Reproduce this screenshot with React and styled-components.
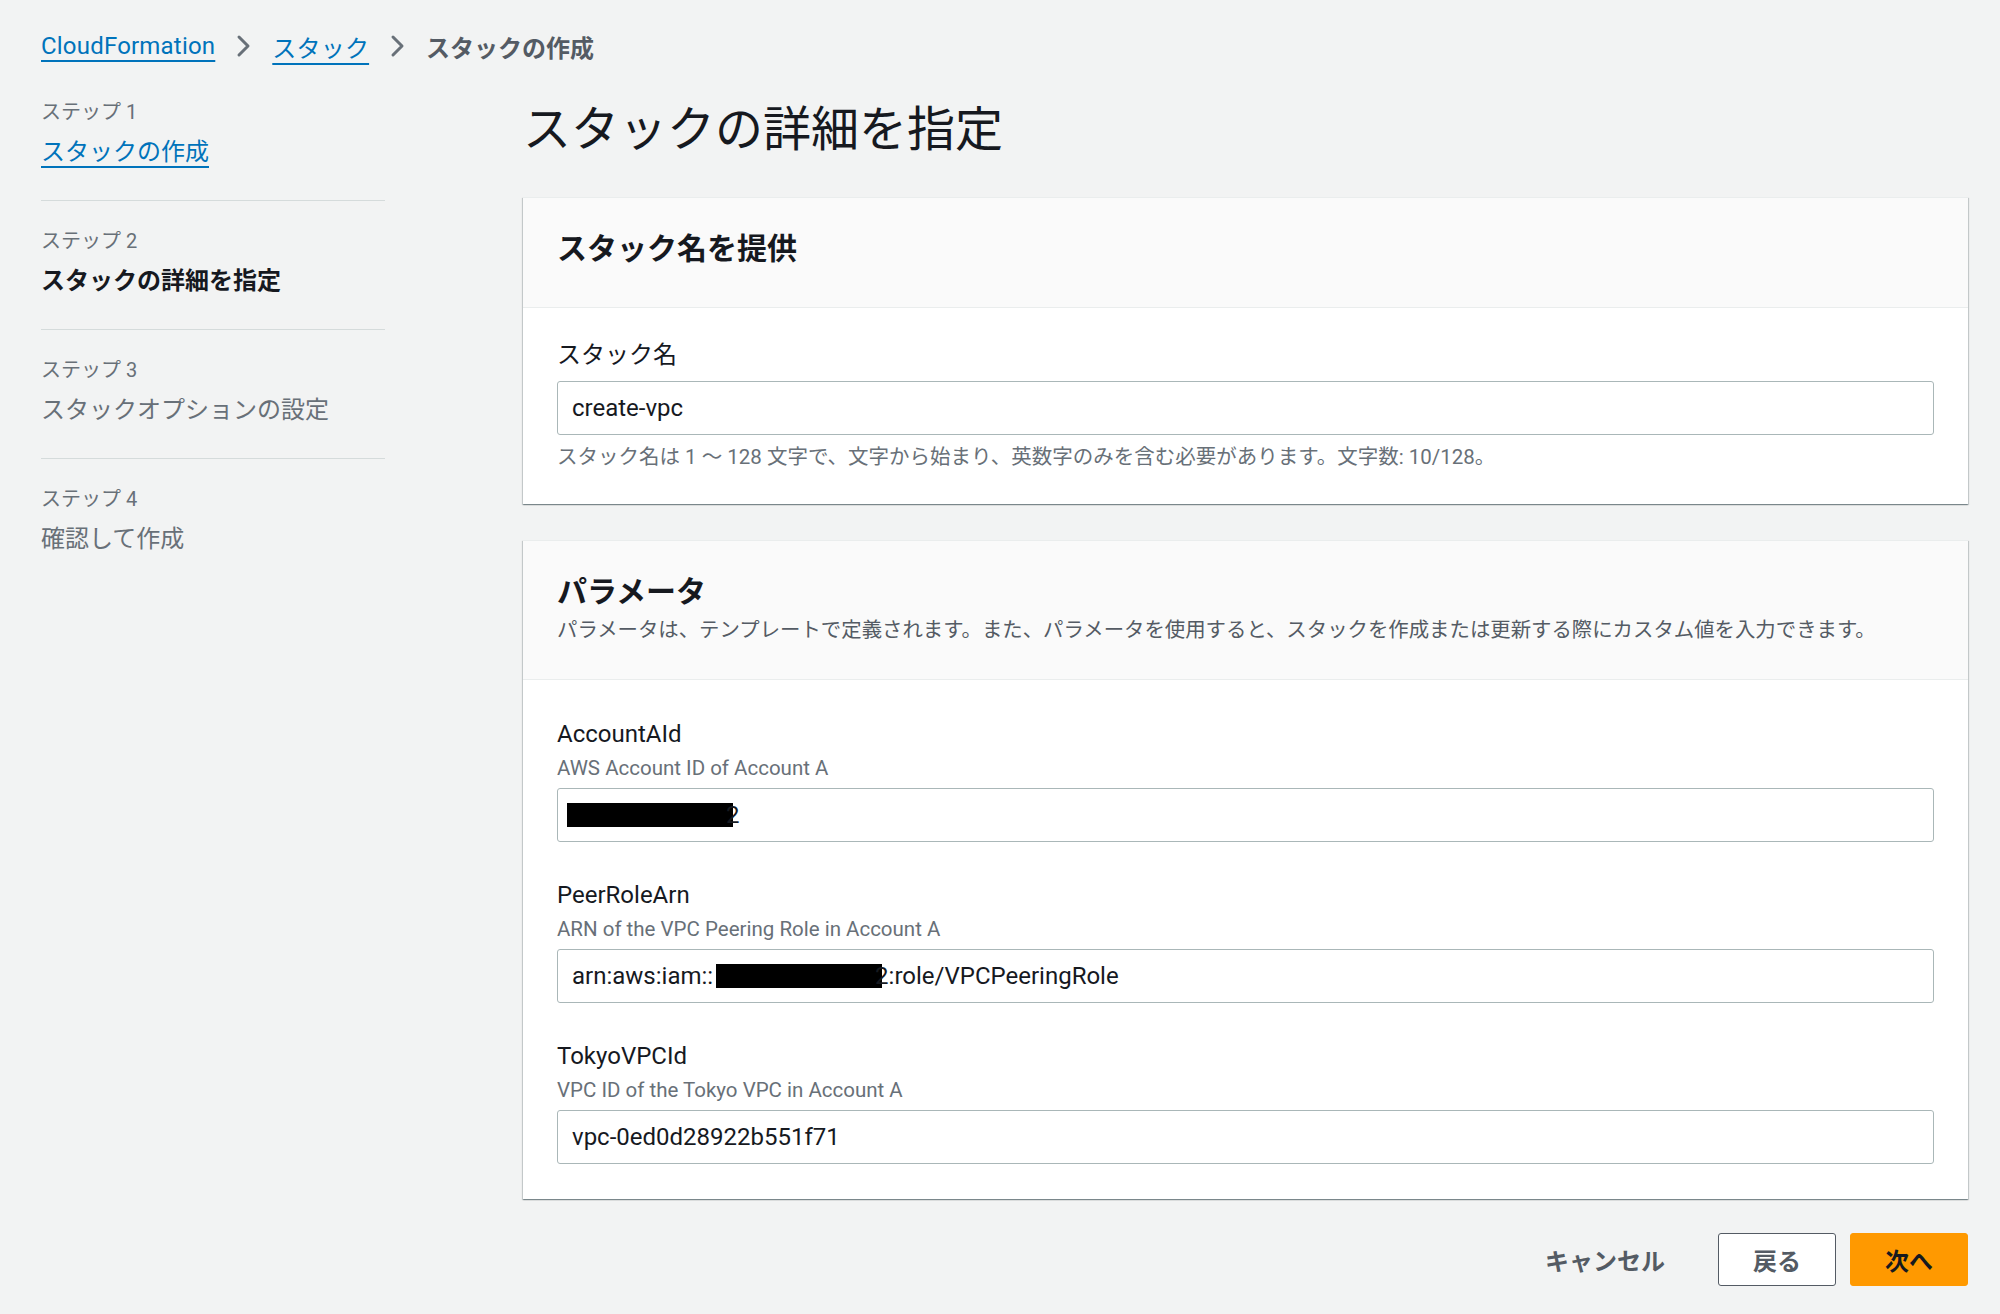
import React from "react";
import styled, { createGlobalStyle } from "styled-components";

const GlobalStyle = createGlobalStyle`
  body {
    margin: 0;
    background: #f2f3f3;
    font-family: Roboto, "Noto Sans CJK JP", sans-serif;
    color: #16191f;
  }
`;

const Page = styled.div`
  padding: 30px 32px 40px 41px;
`;

const Breadcrumbs = styled.nav`
  display: flex;
  align-items: center;
  gap: 21px;
  height: 32px;
  font-size: 24px;
`;

const Crumb = styled.a`
  color: #0073bb;
  letter-spacing: 0.2px;
  text-decoration: underline;
  text-decoration-thickness: 2px;
  text-underline-offset: 6px;
`;

const CurrentCrumb = styled.span`
  color: #545b64;
  font-weight: 700;
`;

const Layout = styled.div`
  display: grid;
  grid-template-columns: 344px 1fr;
  column-gap: 138px;
  margin-top: 36px;
`;

const StepList = styled.ol`
  list-style: none;
  margin: 0;
  padding: 0;
`;

const Step = styled.li`
  padding: 26px 0 32px;
  border-bottom: 1px solid #d5dbdb;
  &:first-child {
    padding-top: 0;
  }
  &:last-child {
    border-bottom: none;
  }
`;

const StepLabel = styled.div`
  font-size: 20px;
  line-height: 28px;
  color: #687078;
`;

const StepTitle = styled.div`
  margin-top: 10px;
  font-size: 24px;
  line-height: 32px;
  color: ${(p) => (p.$active ? "#16191f" : "#687078")};
  font-weight: ${(p) => (p.$active ? 700 : 400)};
  a {
    color: #0073bb;
    text-decoration: underline;
    text-decoration-thickness: 2px;
    text-underline-offset: 6px;
  }
`;

const Main = styled.main`
  min-width: 0;
`;

const PageTitle = styled.h1`
  margin: 4px 0 0;
  font-size: 48px;
  line-height: 56px;
  font-weight: 400;
  color: #16191f;
`;

const Panel = styled.section`
  background: #fff;
  border-top: 1px solid #eaeded;
  box-shadow: 0 1px 1px 0 rgba(0, 28, 36, 0.3),
    1px 1px 1px 0 rgba(0, 28, 36, 0.15), -1px 1px 1px 0 rgba(0, 28, 36, 0.15);
  margin-top: ${(p) => p.$gap || "36px"};
`;

const PanelHeader = styled.header`
  background: #fafafa;
  border-bottom: 1px solid #eaeded;
  padding: 33px 34px ${(p) => p.$bottom || "40px"};
`;

const PanelTitle = styled.h2`
  margin: 0;
  font-size: 30px;
  line-height: 36px;
  font-weight: 700;
`;

const PanelDescription = styled.p`
  margin: 6px 0 0;
  font-size: 20.4px;
  line-height: 28px;
  color: #545b64;
`;

const PanelBody = styled.div`
  padding: ${(p) => p.$padding};
  display: flex;
  flex-direction: column;
  gap: 38px;
`;

const Field = styled.div`
  display: flex;
  flex-direction: column;
`;

const Label = styled.label`
  font-size: 24px;
  line-height: 30px;
  color: #16191f;
`;

const Description = styled.div`
  margin-top: 5px;
  font-size: 20.5px;
  line-height: 28px;
  color: #687078;
`;

const Input = styled.div`
  margin-top: ${(p) => p.$offset || "6px"};
  height: 54px;
  box-sizing: border-box;
  border: 1px solid #aab7b8;
  border-radius: 3px;
  background: #fff;
  padding: 0 14px;
  display: flex;
  align-items: center;
  font-size: 24px;
  color: #16191f;
  white-space: nowrap;
`;

const Hint = styled.div`
  margin-top: 8px;
  font-size: 20.5px;
  line-height: 28px;
  color: #687078;
`;

const Redacted = styled.span`
  display: inline-block;
  width: ${(p) => p.$width}px;
  height: 24px;
  margin-left: ${(p) => p.$shift || 0}px;
  background: #000;
`;

const Tail = styled.span`
  margin-left: -7px;
`;

const Actions = styled.div`
  display: flex;
  justify-content: flex-end;
  align-items: center;
  gap: 14px;
  margin-top: 34px;
`;

const Button = styled.button`
  height: 53px;
  box-sizing: border-box;
  padding: 0 34px;
  border-radius: 3px;
  font-family: inherit;
  font-size: 24px;
  font-weight: 700;
  cursor: pointer;
  border: 1px solid
    ${(p) =>
      p.$variant === "primary"
        ? "#ff9900"
        : p.$variant === "link"
        ? "transparent"
        : "#545b64"};
  background: ${(p) =>
    p.$variant === "primary"
      ? "#ff9900"
      : p.$variant === "link"
      ? "transparent"
      : "#fff"};
  color: ${(p) => (p.$variant === "primary" ? "#16191f" : "#545b64")};
  ${(p) => p.$variant === "link" && "padding: 0 20px; margin-right: 18px;"}
`;

const Chevron = () => (
  <svg width="15" height="24" viewBox="0 0 15 24" aria-hidden="true">
    <polyline
      points="3,3 12,12 3,21"
      fill="none"
      stroke="#687078"
      strokeWidth="3"
      strokeLinecap="round"
      strokeLinejoin="round"
    />
  </svg>
);

const steps = [
  { label: "ステップ 1", title: "スタックの作成", link: true },
  { label: "ステップ 2", title: "スタックの詳細を指定", active: true },
  { label: "ステップ 3", title: "スタックオプションの設定" },
  { label: "ステップ 4", title: "確認して作成" },
];

export default function App() {
  return (
    <>
      <GlobalStyle />
      <Page>
        <Breadcrumbs>
          <Crumb>CloudFormation</Crumb>
          <Chevron />
          <Crumb>スタック</Crumb>
          <Chevron />
          <CurrentCrumb>スタックの作成</CurrentCrumb>
        </Breadcrumbs>

        <Layout>
          <StepList>
            {steps.map((s) => (
              <Step key={s.label}>
                <StepLabel>{s.label}</StepLabel>
                <StepTitle $active={s.active}>
                  {s.link ? <a>{s.title}</a> : s.title}
                </StepTitle>
              </Step>
            ))}
          </StepList>

          <Main>
            <PageTitle>スタックの詳細を指定</PageTitle>

            <Panel $gap="39px">
              <PanelHeader>
                <PanelTitle>スタック名を提供</PanelTitle>
              </PanelHeader>
              <PanelBody $padding="32px 34px 33px">
                <Field>
                  <Label>スタック名</Label>
                  <Input $offset="11px">create-vpc</Input>
                  <Hint>
                    スタック名は 1 〜 128
                    文字で、文字から始まり、英数字のみを含む必要があります。文字数:
                    10/128。
                  </Hint>
                </Field>
              </PanelBody>
            </Panel>

            <Panel>
              <PanelHeader $bottom="35px">
                <PanelTitle>パラメータ</PanelTitle>
                <PanelDescription>
                  パラメータは、テンプレートで定義されます。また、パラメータを使用すると、スタックを作成または更新する際にカスタム値を入力できます。
                </PanelDescription>
              </PanelHeader>
              <PanelBody $padding="39px 34px 35px">
                <Field>
                  <Label>AccountAId</Label>
                  <Description>AWS Account ID of Account A</Description>
                  <Input>
                    <Redacted $width={166} $shift={-5} />
                    <Tail>2</Tail>
                  </Input>
                </Field>
                <Field>
                  <Label>PeerRoleArn</Label>
                  <Description>ARN of the VPC Peering Role in Account A</Description>
                  <Input>
                    arn:aws:iam::
                    <Redacted $width={166} $shift={3} />
                    <Tail>2:role/VPCPeeringRole</Tail>
                  </Input>
                </Field>
                <Field>
                  <Label>TokyoVPCId</Label>
                  <Description>VPC ID of the Tokyo VPC in Account A</Description>
                  <Input>vpc-0ed0d28922b551f71</Input>
                </Field>
              </PanelBody>
            </Panel>

            <Actions>
              <Button $variant="link">キャンセル</Button>
              <Button>戻る</Button>
              <Button $variant="primary">次へ</Button>
            </Actions>
          </Main>
        </Layout>
      </Page>
    </>
  );
}
